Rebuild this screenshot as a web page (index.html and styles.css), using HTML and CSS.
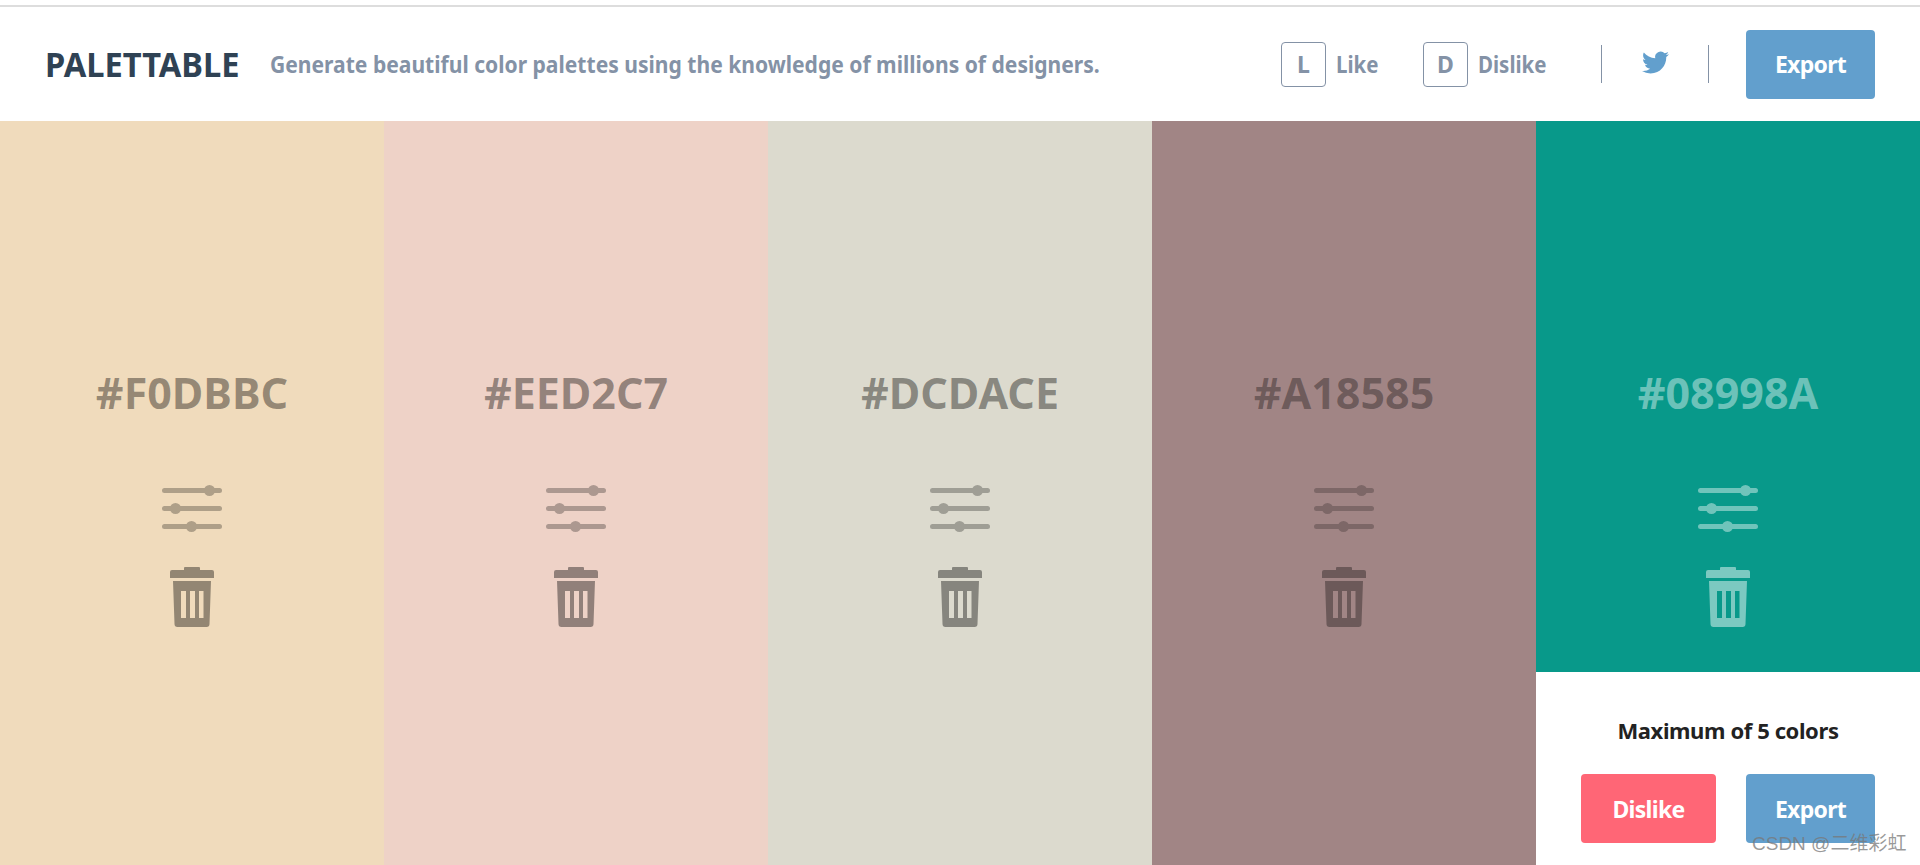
FILE: index.html
```html
<!DOCTYPE html>
<html lang="en">
<head>
<meta charset="utf-8">
<title>Palettable</title>
<link rel="stylesheet" href="styles.css">
</head>
<body>
<svg class="defs" width="0" height="0" aria-hidden="true">
  <symbol id="trash" viewBox="0 0 44 60">
    <path d="M14 1a1 1 0 0 1 1-1h14a1 1 0 0 1 1 1v2h12a2 2 0 0 1 2 2v6H0V5a2 2 0 0 1 2-2h12z"/>
    <path fill-rule="evenodd" d="M3 14H41L39.500 57a3 3 0 0 1-3 3H7.500a3 3 0 0 1-3-3z M11 24V51H16V24z M20 24V51H25V24z M29 24V51H33.500V24z"/>
  </symbol>
</svg>

<header class="topbar">
  <div class="brand">PALETTABLE</div>
  <div class="tagline">Generate beautiful color palettes using the knowledge of millions of designers.</div>
  <nav class="actions">
    <div class="shortcut shortcut-like"><span class="key">L</span><span class="label">Like</span></div>
    <div class="shortcut shortcut-dislike"><span class="key">D</span><span class="label">Dislike</span></div>
    <div class="social">
      <svg class="bird" viewBox="0 0 24 24"><path d="M23.950 4.570a10 10 0 0 1-2.820.775 4.960 4.960 0 0 0 2.160-2.720c-.951.555-2.005.959-3.127 1.184a4.920 4.920 0 0 0-8.384 4.482C7.690 8.095 4.067 6.130 1.640 3.162a4.822 4.822 0 0 0-.666 2.475c0 1.710.870 3.213 2.188 4.096a4.904 4.904 0 0 1-2.228-.616v.060a4.923 4.923 0 0 0 3.946 4.827 4.996 4.996 0 0 1-2.212.085 4.936 4.936 0 0 0 4.604 3.417 9.867 9.867 0 0 1-6.102 2.105c-.390 0-.779-.023-1.170-.067a13.995 13.995 0 0 0 7.557 2.209c9.053 0 13.998-7.496 13.998-13.985 0-.210 0-.420-.015-.630A9.935 9.935 0 0 0 24 4.590z"/></svg>
    </div>
    <a class="btn btn-blue">Export</a>
  </nav>
</header>

<main class="palette">
  <section class="col col-1">
    <div class="swatch">
      <div class="hex">#F0DBBC</div>
      <div class="sliders"><i class="track"><b class="knob knob-a"></b></i><i class="track"><b class="knob knob-b"></b></i><i class="track"><b class="knob knob-c"></b></i></div>
      <svg class="trash"><use href="#trash"/></svg>
    </div>
  </section>
  <section class="col col-2">
    <div class="swatch">
      <div class="hex">#EED2C7</div>
      <div class="sliders"><i class="track"><b class="knob knob-a"></b></i><i class="track"><b class="knob knob-b"></b></i><i class="track"><b class="knob knob-c"></b></i></div>
      <svg class="trash"><use href="#trash"/></svg>
    </div>
  </section>
  <section class="col col-3">
    <div class="swatch">
      <div class="hex">#DCDACE</div>
      <div class="sliders"><i class="track"><b class="knob knob-a"></b></i><i class="track"><b class="knob knob-b"></b></i><i class="track"><b class="knob knob-c"></b></i></div>
      <svg class="trash"><use href="#trash"/></svg>
    </div>
  </section>
  <section class="col col-4">
    <div class="swatch">
      <div class="hex">#A18585</div>
      <div class="sliders"><i class="track"><b class="knob knob-a"></b></i><i class="track"><b class="knob knob-b"></b></i><i class="track"><b class="knob knob-c"></b></i></div>
      <svg class="trash"><use href="#trash"/></svg>
    </div>
  </section>
  <section class="col col-5">
    <div class="swatch">
      <div class="hex">#08998A</div>
      <div class="sliders"><i class="track"><b class="knob knob-a"></b></i><i class="track"><b class="knob knob-b"></b></i><i class="track"><b class="knob knob-c"></b></i></div>
      <svg class="trash"><use href="#trash"/></svg>
    </div>
    <div class="limit">
      <div class="limit-text">Maximum of 5 colors</div>
      <div class="limit-buttons">
        <a class="btn btn-red">Dislike</a>
        <a class="btn btn-blue">Export</a>
      </div>
    </div>
  </section>
</main>

<div class="watermark">CSDN @二维彩虹</div>
</body>
</html>
```
FILE: styles.css
```css
* { box-sizing: border-box; }
html, body { height: 100%; }
body {
  margin: 0;
  height: 865px;
  overflow: hidden;
  background: #fff;
  padding-top: 5px;
  display: flex;
  flex-direction: column;
  font-family: "Noto Sans", "Open Sans", sans-serif;
  font-weight: 700;
  position: relative;
}
.defs { position: absolute; }

.topbar {
  height: 116px;
  border-top: 2px solid #ddd;
  display: flex;
  align-items: center;
  padding: 0 45px 0 45px;
  flex: none;
}
.brand {
  font-size: 34px;
  color: #2f4254;
  transform: scaleX(.96);
  transform-origin: left center;
  width: 225px;
  flex: none;
}
.tagline {
  font-size: 23px;
  color: #8492a6;
  transform: scaleX(.916);
  transform-origin: left center;
  white-space: nowrap;
  width: 830px;
  flex: none;
}
.actions {
  margin-left: auto;
  display: flex;
  align-items: center;
}
.shortcut {
  display: flex;
  align-items: center;
  color: #8492a6;
  font-size: 23px;
}
.shortcut-like { width: 142px; }
.shortcut-dislike { width: 178px; }
.key {
  width: 45px;
  height: 45px;
  border: 1px solid #8492a6;
  border-radius: 4px;
  background: #fff;
  display: flex;
  align-items: center;
  justify-content: center;
  margin-right: 10px;
  font-size: 23px;
}
.label { transform: scaleX(.89); transform-origin: left center; }
.social {
  width: 108px;
  height: 38px;
  border-left: 1px solid #8492a6;
  border-right: 1px solid #8492a6;
  display: flex;
  align-items: center;
  justify-content: center;
  margin-right: 37px;
}
.bird { width: 27px; height: 27px; fill: #629fcd; margin-top: -3px; }

.btn {
  display: flex;
  align-items: center;
  justify-content: center;
  height: 69px;
  border-radius: 4px;
  color: #fff;
  font-size: 23px;
  letter-spacing: -0.7px;
}
.btn-blue { background: #629fcd; width: 129px; }
.btn-red { background: #ff6676; width: 135px; }

.palette {
  flex: 1;
  display: grid;
  grid-template-columns: repeat(5, 1fr);
  min-height: 0;
}
.col { display: flex; flex-direction: column; }
.swatch {
  flex: 1;
  padding-top: 244px;
  display: flex;
  flex-direction: column;
  align-items: center;
}
.col-1 .swatch { background: #f0dbbc; }
.col-2 .swatch { background: #eed2c7; }
.col-3 .swatch { background: #dcdace; }
.col-4 .swatch { background: #a18585; }
.col-5 .swatch { background: #08998a; }

.hex {
  font-size: 43px;
  line-height: 56px;
  color: rgba(0, 0, 0, .39);
  white-space: nowrap;
}
.sliders {
  width: 60px;
  margin-top: 67px;
  display: flex;
  flex-direction: column;
  gap: 13px;
  opacity: .27;
}
.track {
  display: block;
  height: 5px;
  border-radius: 3px;
  background: #000;
  position: relative;
}
.knob {
  position: absolute;
  top: -3px;
  width: 11px;
  height: 11px;
  border-radius: 50%;
  background: #000;
}
.knob-a { left: 42px; }
.knob-b { left: 8px; }
.knob-c { left: 24px; }
.trash {
  width: 44px;
  height: 60px;
  margin-top: 38px;
  fill: rgba(0, 0, 0, .39);
}
.col-4 .hex { color: rgba(0, 0, 0, .33); }
.col-4 .sliders { opacity: .22; }
.col-4 .trash { fill: rgba(0, 0, 0, .33); }
.col-5 .hex { color: rgba(255, 255, 255, .42); }
.col-5 .sliders { opacity: .42; }
.col-5 .track, .col-5 .knob { background: #fff; }
.col-5 .trash { fill: rgba(255, 255, 255, .47); }

.limit {
  flex: none;
  height: 193px;
  background: #fff;
  padding-top: 43px;
}
.limit-text {
  text-align: center;
  font-size: 22px;
  line-height: 30px;
  color: #222;
  letter-spacing: -0.4px;
}
.limit-buttons {
  margin-top: 29px;
  padding-left: 45px;
  display: flex;
  gap: 30px;
}

.watermark {
  position: absolute;
  left: 1752px;
  top: 832px;
  font-family: "Liberation Sans", "Noto Sans CJK SC", sans-serif;
  font-weight: 400;
  font-size: 19px;
  line-height: 24px;
  color: rgba(120, 120, 120, .75);
  white-space: nowrap;
}
```
